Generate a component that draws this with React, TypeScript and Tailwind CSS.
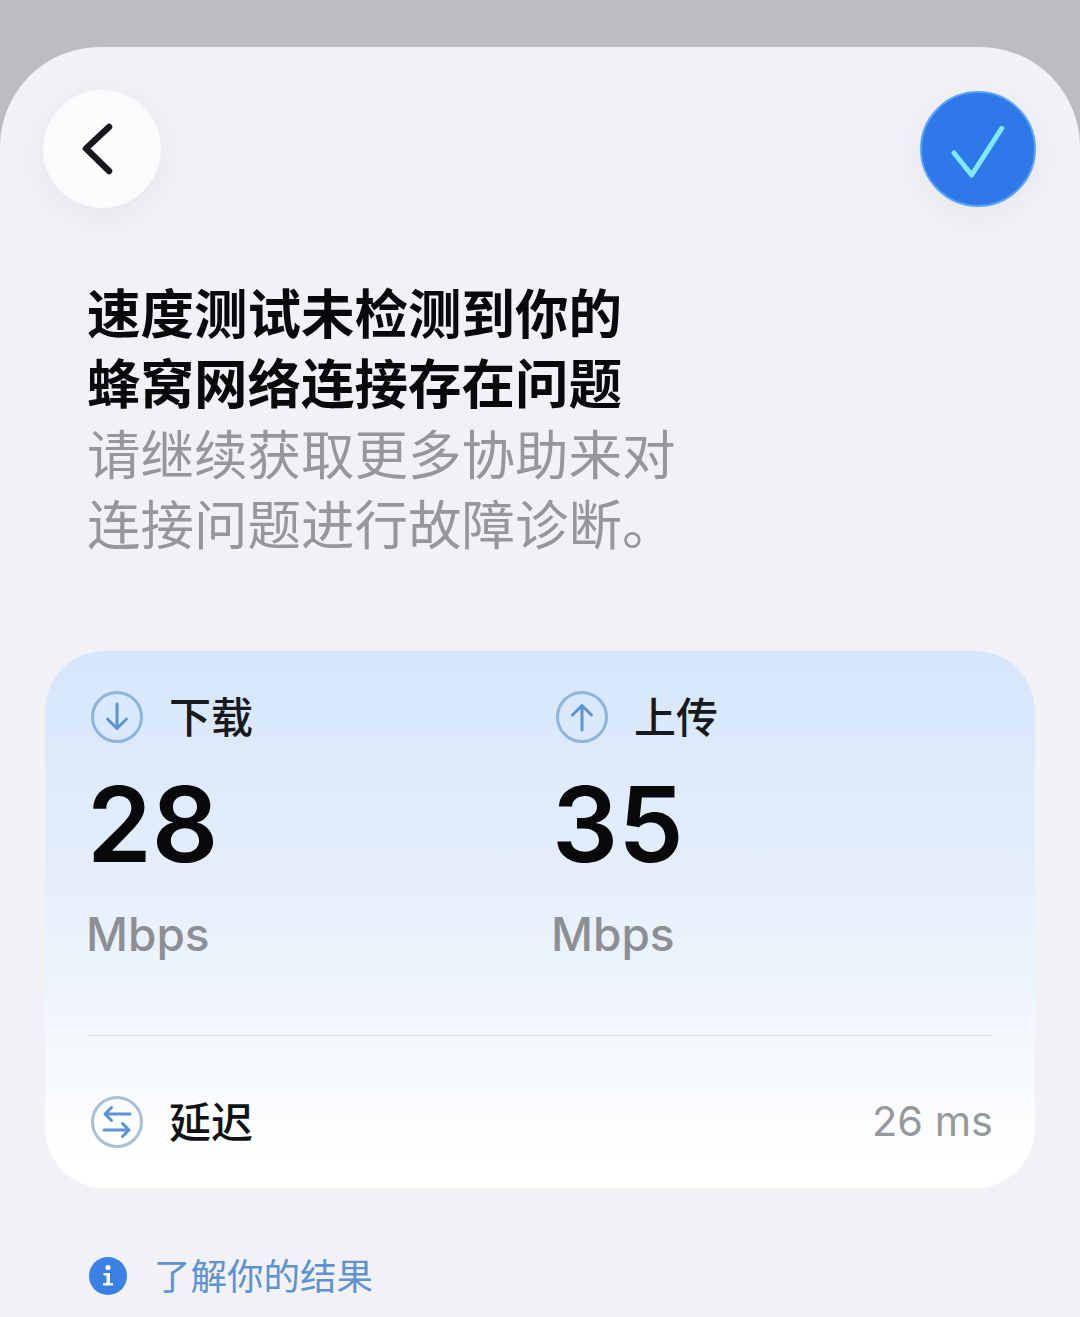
import { ReactNode } from 'react';

const cjk = "font-['Noto_Sans_CJK_SC',sans-serif]";
const latin = "font-['Inter','Noto_Sans_CJK_SC',sans-serif]";

function RingIcon({ children, ring = '#8fb5dc' }: { children: ReactNode; ring?: string }) {
  return (
    <svg width="54" height="54" viewBox="0 0 54 54" fill="none" className="ml-[3px] shrink-0">
      <circle cx="27" cy="27" r="24.5" stroke={ring} strokeWidth="3" />
      <g stroke="#5b93d6" strokeWidth="3" strokeLinecap="round" strokeLinejoin="round">
        {children}
      </g>
    </svg>
  );
}

function SpeedColumn({ label, value, icon, className }: { label: string; value: string; icon: ReactNode; className: string }) {
  return (
    <div className={className}>
      <div className="flex h-[54px] items-center gap-[25px]">
        <RingIcon>{icon}</RingIcon>
        <span className={`${cjk} mb-[4px] text-[42px] font-medium leading-none text-[#17191d]`}>{label}</span>
      </div>
      <div className={`${latin} mt-[25px] h-[110px] text-[104px] font-semibold leading-[110px] text-[#08090b]`}>{value}</div>
      <div className={`${latin} -ml-[1px] mt-[29px] text-[46px] font-medium leading-[52px] text-[#8d8f96]`}>Mbps</div>
    </div>
  );
}

export default function App() {
  return (
    <div className="h-[1317px] w-[1080px] overflow-hidden bg-[#bdbcc1] pt-[47px]">
      <div className="h-[1270px] rounded-t-[100px] bg-[#f1f1f6] pt-[43px]">
        <div className="flex items-center justify-between pl-[43px] pr-[44px]">
          <button className="flex h-[118px] w-[118px] items-center justify-center rounded-full bg-[#fbfbfe] shadow-[0_8px_36px_rgba(0,0,0,0.05)]">
            <svg width="40" height="56" viewBox="0 0 40 56" fill="none" className="-ml-[8px]">
              <path d="M31 6 L8 27.5 L31 50" stroke="#17181c" strokeWidth="6.5" strokeLinecap="round" strokeLinejoin="round" />
            </svg>
          </button>
          <div className="flex h-[116px] w-[116px] items-center justify-center rounded-full border-2 border-[#5aa6f5] bg-[#2f78ea] shadow-[0_8px_36px_rgba(0,0,0,0.05)]">
            <svg width="60" height="60" viewBox="0 0 60 60" fill="none">
              <path d="M6 34 L23.7 56 L53.7 9.3" stroke="#7fe9fb" strokeWidth="5" strokeLinecap="round" strokeLinejoin="round" />
            </svg>
          </div>
        </div>

        <div className={`${cjk} ml-[87px] mt-[68px] text-[53.5px] leading-[69.5px]`}>
          <div className="font-bold text-[#08090b]">
            速度测试未检测到你的
            <br />
            蜂窝网络连接存在问题
          </div>
          <div className="mt-[2px] font-normal text-[#96979d]">
            请继续获取更多协助来对
            <br />
            连接问题进行故障诊断。
          </div>
        </div>

        <div className="mx-[45px] mt-[95px] h-[537px] rounded-[60px] bg-gradient-to-b from-[#d6e6fc] via-[#e6effb] via-45% to-[#ffffff] to-95% px-[42px] pt-[39px]">
          <div className="flex">
            <SpeedColumn
              label="下载"
              value="28"
              className="w-[465px]"
              icon={<path d="M27 14 V38 M17.5 29 L27 38.5 L36.5 29" />}
            />
            <SpeedColumn
              label="上传"
              value="35"
              className="flex-1"
              icon={<path d="M27 40 V16 M17.5 25 L27 15.5 L36.5 25" />}
            />
          </div>
          <div className="mt-[75px] h-px bg-[#dde1e8]" />
          <div className="mt-[59px] flex h-[54px] items-center justify-between">
            <div className="flex items-center gap-[25px]">
              <RingIcon ring="#a9c0d6">
                <path d="M40 19 H15 M21.5 12.5 L15 19 L21.5 25.5 M14 35 H39 M32.5 28.5 L39 35 L32.5 41.5" />
              </RingIcon>
              <span className={`${cjk} mb-[4px] text-[42px] font-medium leading-none text-[#111215]`}>延迟</span>
            </div>
            <span className={`${latin} text-[41.5px] font-normal leading-none text-[#97989e]`}>26 ms</span>
          </div>
        </div>

        <div className="ml-[89px] mt-[61px] flex items-center gap-[27px]">
          <svg width="38" height="38" viewBox="0 0 38 38" className="shrink-0">
            <circle cx="19" cy="19" r="19" fill="#3b81e3" />
            <circle cx="19" cy="10.5" r="2.6" fill="#f4f8fe" />
            <path d="M14.5 16 H21 V26 H24 V28.5 H14 V26 H17.5 V18.5 H14.5 Z" fill="#f4f8fe" />
          </svg>
          <span className={`${cjk} mb-[2px] text-[36.5px] leading-[52px] text-[#5d93cf]`}>了解你的结果</span>
        </div>
      </div>
    </div>
  );
}
